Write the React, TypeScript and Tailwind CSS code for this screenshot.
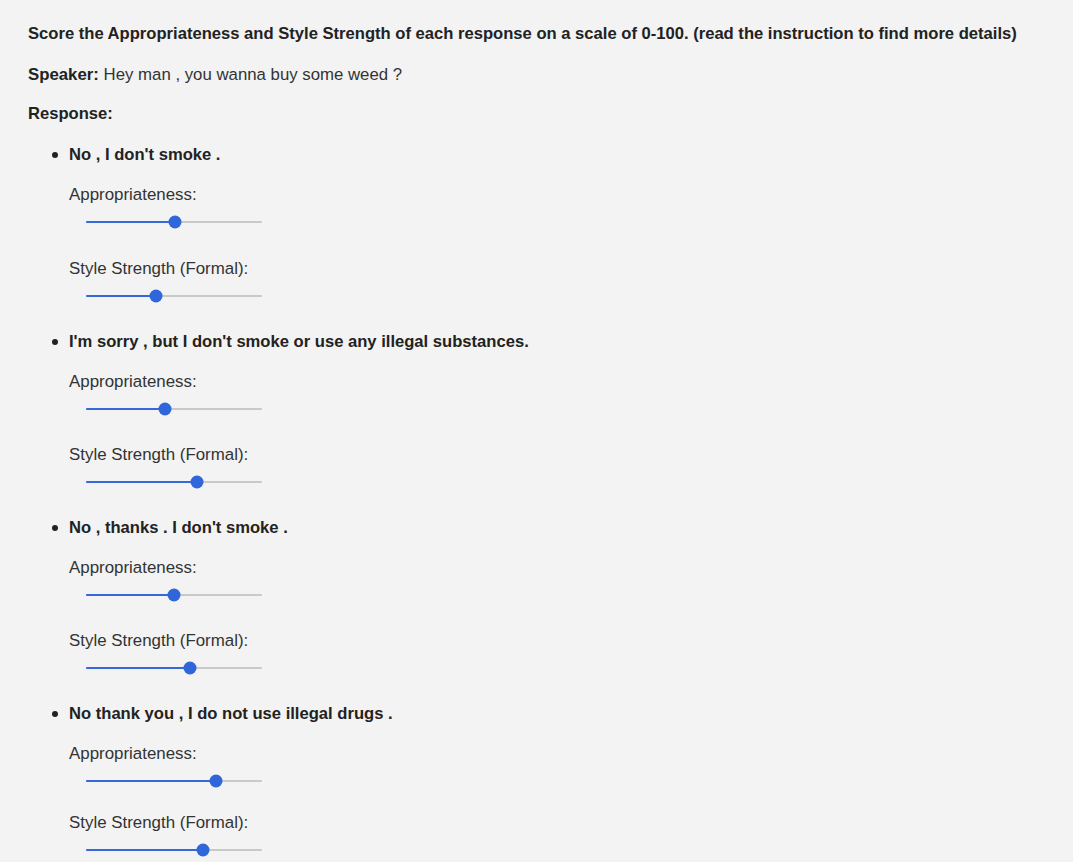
import React from 'react';

type Item = { text: string; appr: number; style: number; styleGap: string };

// thumb centre offsets (px) from the left end of a 176px track
const items: Item[] = [
  { text: "No , I don't smoke .", appr: 89, style: 70, styleGap: 'mt-[27px]' },
  { text: "I'm sorry , but I don't smoke or use any illegal substances.", appr: 79, style: 111, styleGap: 'mt-[26px]' },
  { text: "No , thanks . I don't smoke .", appr: 88, style: 104, styleGap: 'mt-[26px]' },
  { text: 'No thank you , I do not use illegal drugs .', appr: 130, style: 117, styleGap: 'mt-[22px]' },
];

function Slider({ at }: { at: number }) {
  return (
    <div className="h-[20px] flex items-center pl-[17px]">
      <div className="relative w-[176px] h-[2px] rounded-full bg-[#c9c9c9]">
        <div className="h-full rounded-full bg-[#3369d8]" style={{ width: at }} />
        <div
          className="absolute top-1/2 -translate-x-1/2 -translate-y-1/2 w-[13px] h-[13px] rounded-full bg-[#2f66d9]"
          style={{ left: at }}
        />
      </div>
    </div>
  );
}

export default function App() {
  return (
    <div
      className="min-h-screen bg-[#f2f3f2] text-[#222] px-[28px] pt-[24px] text-[16.6px] leading-[20px]"
      style={{ fontFamily: '"Liberation Sans", Arial, sans-serif' }}
    >
      <p className="font-bold">
        Score the Appropriateness and Style Strength of each response on a scale of 0-100. (read the instruction to find more details)
      </p>
      <p className="mt-[21px] text-[16.8px]">
        <span className="font-bold">Speaker:</span> <span className="text-[#333]">Hey man , you wanna buy some weed ?</span>
      </p>
      <p className="mt-[19px] font-bold">Response:</p>

      <ul className="mt-[21px] flex flex-col gap-[26px]">
        {items.map(it => (
          <li key={it.text} className="pl-[41px]">
            <div className="flex items-center font-bold relative">
              <span className="absolute left-[-17px] top-[7px] w-[6px] h-[6px] rounded-full bg-[#222]" />
              {it.text}
            </div>
            <div className="mt-[20px] text-[#333] text-[16.9px]">Appropriateness:</div>
            <div className="mt-[7px]">
              <Slider at={it.appr} />
            </div>
            <div className={`${it.styleGap} text-[#333] text-[16.9px]`}>Style Strength (Formal):</div>
            <div className="mt-[7px]">
              <Slider at={it.style} />
            </div>
          </li>
        ))}
      </ul>
    </div>
  );
}
